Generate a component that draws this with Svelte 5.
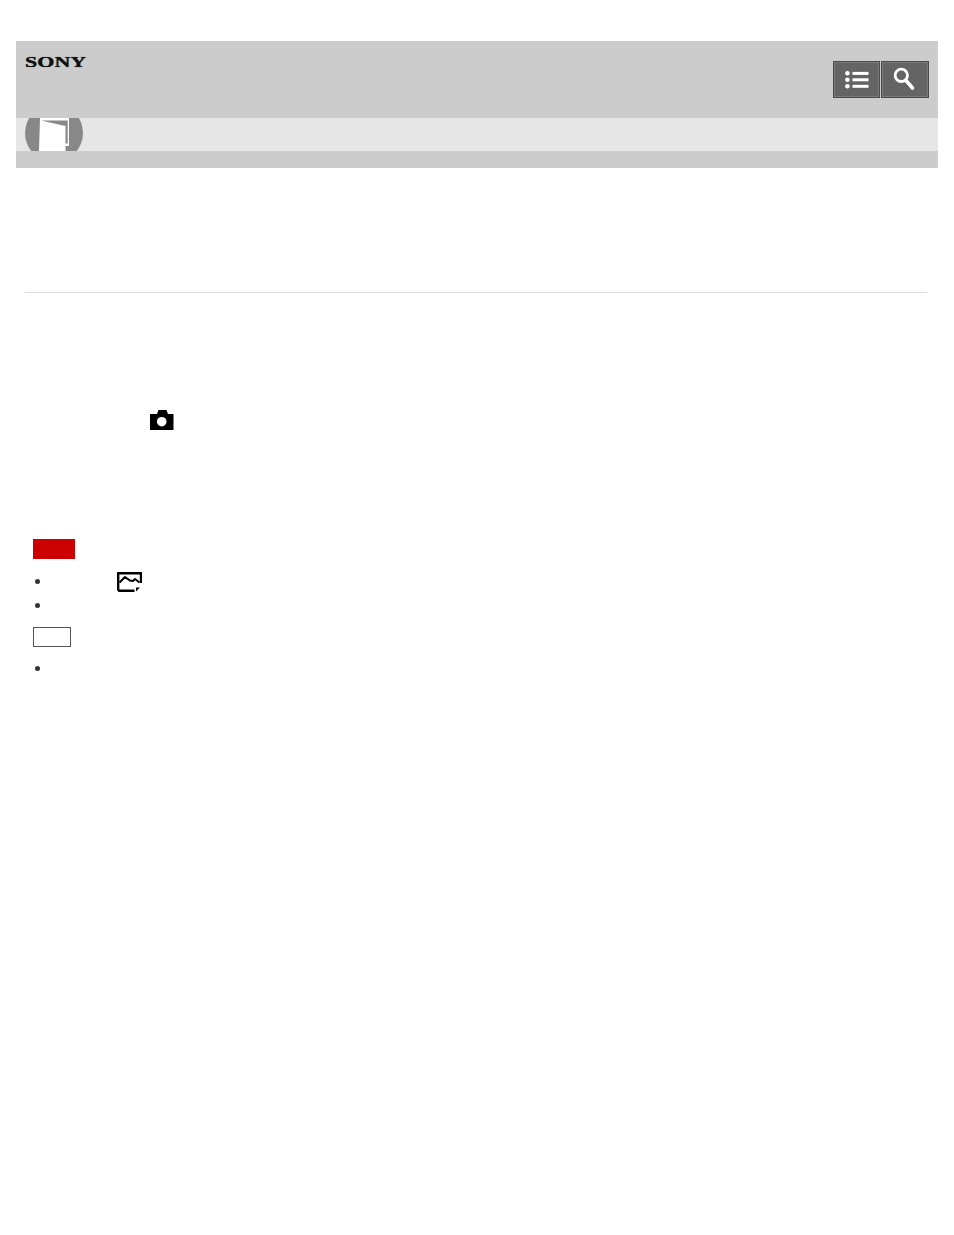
<script>
  const notes = [
    { id: 1, icon: true },
    { id: 2, icon: false }
  ];
</script>

<div class="page">
  <header class="header">
    <div class="top">
      <span class="logo">SONY</span>
      <div class="tools">
        <button class="tool" aria-label="Contents list">
          <svg width="24" height="18" viewBox="0 0 24 18">
            <circle cx="2.4" cy="2.3" r="2.3" fill="#fff" />
            <circle cx="2.4" cy="8.8" r="2.3" fill="#fff" />
            <circle cx="2.4" cy="15.3" r="2.3" fill="#fff" />
            <rect x="7.5" y="0.9" width="16" height="3" fill="#fff" />
            <rect x="7.5" y="7.3" width="16" height="3" fill="#fff" />
            <rect x="7.5" y="13.8" width="16" height="3" fill="#fff" />
          </svg>
        </button>
        <button class="tool" aria-label="Search">
          <svg class="glass" width="24" height="26" viewBox="0 0 24 26">
            <circle cx="9.3" cy="9.3" r="6.2" fill="none" stroke="#fff" stroke-width="2.8" />
            <path d="M14 14.5 L20.5 22" fill="none" stroke="#fff" stroke-width="3.6" stroke-linecap="round" />
          </svg>
        </button>
      </div>
    </div>
    <div class="band">
      <svg class="book" width="58" height="33" viewBox="0 0 58 33">
        <circle cx="29" cy="15" r="29" fill="#888" />
        <path d="M15 0 H44 V28 H40.5 V33 H14 Z" fill="#fff" />
        <path d="M16 2.5 H42.7 V25.5 H40.5 V8 Z" fill="#888" />
      </svg>
    </div>
    <div class="bottom"></div>
  </header>

  <hr class="rule" />

  <div class="step">
    <svg width="24" height="20" viewBox="0 0 24 20">
      <path d="M0 4 H7 L8.5 0 H16.5 L18 4 H23.5 V20 H0 Z" fill="#000" />
      <circle cx="11.7" cy="11.7" r="4.8" fill="#fff" />
    </svg>
  </div>

  <section class="notes">
    <div class="label hint"></div>
    {#each notes as n (n.id)}
      <div class="item" class:first={n.icon}>
        <span class="dot"></span>
        {#if n.icon}
          <svg class="scene" width="25" height="20" viewBox="0 0 25 20">
            <path d="M1.2 18.8 V1.2 H24 V11 M1.2 18.8 H17.5" fill="none" stroke="#000" stroke-width="2.4" />
            <path d="M2.5 10.5 L8 5 L13 8.5 L16 9 L18 7 L22.5 10.5" fill="none" stroke="#000" stroke-width="2" />
            <path d="M19 15.5 H23 L19 19.5 Z" fill="#000" />
          </svg>
        {/if}
      </div>
    {/each}
    <div class="label outline"></div>
    <div class="item last"><span class="dot"></span></div>
  </section>
</div>

<style>
  :global(body) {
    background: #fff;
    font-family: "Liberation Sans", Arial, sans-serif;
  }
  .page {
    padding: 41px 16px 560px;
  }
  .header {
    display: flex;
    flex-direction: column;
    background: #ccc;
  }
  .top {
    height: 77px;
    display: flex;
    justify-content: space-between;
    padding: 0 9px;
  }
  .logo {
    font-family: "Liberation Serif", serif;
    font-weight: 700;
    font-size: 14.5px;
    line-height: 14px;
    margin-top: 14px;
    color: #111;
    transform: scaleX(1.52);
    transform-origin: left center;
    text-shadow: 0 0 0.6px #111;
  }
  .tools {
    display: flex;
    gap: 1px;
    margin-top: 20px;
  }
  .tool {
    width: 47px;
    height: 37px;
    padding: 0;
    display: flex;
    align-items: center;
    justify-content: center;
    background: #646464;
    border: 1px solid #4b4b4b;
    box-shadow: inset 0 0 0 1px #7a7a7a;
  }
  .tool + .tool {
    width: 48px;
  }
  .glass {
    margin: 0 2px 2px 0;
  }
  .band {
    height: 33px;
    background: #e6e6e6;
    padding-left: 9px;
    overflow: hidden;
  }
  .book {
    display: block;
  }
  .bottom {
    height: 17px;
  }
  .rule {
    height: 1px;
    border: 0;
    margin: 124px 11px 0 9px;
    background: #ddd;
  }
  .step {
    margin: 117px 0 0 134px;
    height: 20px;
  }
  .step svg {
    display: block;
  }
  .notes {
    margin: 109px 0 0 17px;
    display: flex;
    flex-direction: column;
    align-items: flex-start;
  }
  .label {
    height: 20px;
    box-sizing: border-box;
  }
  .hint {
    width: 42px;
    background: #c00;
  }
  .outline {
    width: 38px;
    margin-top: 11px;
    border: 1px solid #555;
  }
  .item {
    height: 20px;
    margin-top: 4px;
    display: flex;
    align-items: center;
  }
  .item.first {
    margin-top: 13px;
  }
  .item.last {
    margin-top: 12px;
  }
  .dot {
    width: 5px;
    height: 5px;
    margin: 0 0 2px 2px;
    border-radius: 50%;
    background: #333;
  }
  .scene {
    margin-left: 77px;
  }
</style>
